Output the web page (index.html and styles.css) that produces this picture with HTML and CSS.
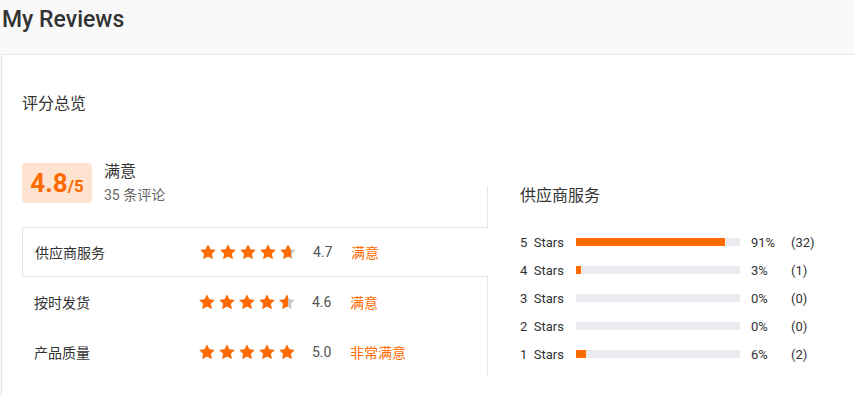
FILE: index.html
```html
<!DOCTYPE html>
<html lang="zh-CN">
<head>
  <meta charset="UTF-8">
  <meta name="viewport" content="width=device-width, initial-scale=1.0">
  <title>My Reviews</title>
  <link rel="stylesheet" href="styles.css">
</head>
<body>
  <svg class="defs" width="0" height="0">
    <symbol id="star" viewBox="0 0 24 24">
      <path d="M12 .6l3.6 7.3 8 1.1-5.8 5.6 1.4 8L12 18.8l-7.2 3.8 1.4-8L.4 9l8-1.1z"/>
    </symbol>
  </svg>

  <div class="header">
    <h1>My Reviews</h1>
  </div>

  <div class="card">
    <h2 class="section-title">评分总览</h2>

    <div class="overview">
      <div class="left">
        <div class="summary">
          <div class="score-box"><span class="big">4.8</span><span class="small">/5</span></div>
          <div class="summary-text">
            <div class="mood">满意</div>
            <div class="count">35 条评论</div>
          </div>
        </div>

        <div class="rows">
          <div class="row active">
            <span class="row-label">供应商服务</span>
            <span class="stars">
              <span class="stars-base">
                <svg><use href="#star"/></svg><svg><use href="#star"/></svg><svg><use href="#star"/></svg><svg><use href="#star"/></svg><svg><use href="#star"/></svg>
              </span>
              <span class="stars-fill" style="width: 91px">
                <svg><use href="#star"/></svg><svg><use href="#star"/></svg><svg><use href="#star"/></svg><svg><use href="#star"/></svg><svg><use href="#star"/></svg>
              </span>
            </span>
            <span class="row-score">4.7</span>
            <span class="row-mood">满意</span>
          </div>
          <div class="row">
            <span class="row-label">按时发货</span>
            <span class="stars">
              <span class="stars-base">
                <svg><use href="#star"/></svg><svg><use href="#star"/></svg><svg><use href="#star"/></svg><svg><use href="#star"/></svg><svg><use href="#star"/></svg>
              </span>
              <span class="stars-fill" style="width: 89px">
                <svg><use href="#star"/></svg><svg><use href="#star"/></svg><svg><use href="#star"/></svg><svg><use href="#star"/></svg><svg><use href="#star"/></svg>
              </span>
            </span>
            <span class="row-score">4.6</span>
            <span class="row-mood">满意</span>
          </div>
          <div class="row">
            <span class="row-label">产品质量</span>
            <span class="stars">
              <span class="stars-base">
                <svg><use href="#star"/></svg><svg><use href="#star"/></svg><svg><use href="#star"/></svg><svg><use href="#star"/></svg><svg><use href="#star"/></svg>
              </span>
              <span class="stars-fill" style="width: 100px">
                <svg><use href="#star"/></svg><svg><use href="#star"/></svg><svg><use href="#star"/></svg><svg><use href="#star"/></svg><svg><use href="#star"/></svg>
              </span>
            </span>
            <span class="row-score">5.0</span>
            <span class="row-mood">非常满意</span>
          </div>
        </div>
      </div>

      <div class="detail">
        <h3 class="detail-title">供应商服务</h3>
        <div class="bar-row">
          <span class="bar-label">5&nbsp; Stars</span>
          <span class="bar"><span class="bar-fill" style="width: 91%"></span></span>
          <span class="bar-pct">91%</span>
          <span class="bar-count">(32)</span>
        </div>
        <div class="bar-row">
          <span class="bar-label">4&nbsp; Stars</span>
          <span class="bar"><span class="bar-fill" style="width: 3%"></span></span>
          <span class="bar-pct">3%</span>
          <span class="bar-count">(1)</span>
        </div>
        <div class="bar-row">
          <span class="bar-label">3&nbsp; Stars</span>
          <span class="bar"><span class="bar-fill" style="width: 0%"></span></span>
          <span class="bar-pct">0%</span>
          <span class="bar-count">(0)</span>
        </div>
        <div class="bar-row">
          <span class="bar-label">2&nbsp; Stars</span>
          <span class="bar"><span class="bar-fill" style="width: 0%"></span></span>
          <span class="bar-pct">0%</span>
          <span class="bar-count">(0)</span>
        </div>
        <div class="bar-row">
          <span class="bar-label">1&nbsp; Stars</span>
          <span class="bar"><span class="bar-fill" style="width: 6%"></span></span>
          <span class="bar-pct">6%</span>
          <span class="bar-count">(2)</span>
        </div>
      </div>
    </div>
  </div>
</body>
</html>
```

FILE: styles.css
```css
body { margin: 0; background: #f9f9f9; font-family: Roboto, "Noto Sans CJK SC", sans-serif; color: #333; }
.defs { position: absolute; }

.header { height: 54px; box-sizing: border-box; padding: 6px 2px 0; }
.header h1 { margin: 0; font-size: 23px; line-height: 28px; font-weight: 500; color: #333; }

.card { margin-left: 1px; background: #fff; border-top: 1px solid #e6e6e6; border-left: 1px solid #e6e6e6; padding: 39px 20px 20px; min-height: 320px; }
.section-title { margin: 0; font-size: 16px; line-height: 20px; font-weight: 400; }

.overview { display: flex; align-items: flex-end; margin-top: 49px; }
.left { width: 465px; }

.summary { display: flex; align-items: flex-start; gap: 12px; margin-bottom: 22px; }
.score-box { width: 70px; height: 40px; background: #fee3d1; border-radius: 4px; display: flex; align-items: baseline; justify-content: center; color: #ff6a00; font-weight: 700; line-height: 40px; }
.score-box .big { font-size: 26px; }
.score-box .small { font-size: 17px; }
.mood { font-size: 16px; line-height: 20px; margin-top: -1px; }
.count { font-size: 14px; line-height: 20px; color: #666; margin-top: 3px; }

.row { height: 50px; box-sizing: border-box; display: flex; align-items: center; padding-left: 12px; font-size: 14px; }
.row.active { border: 1px solid #e6e6e6; border-right: none; background: #fff; margin-right: -1px; position: relative; z-index: 1; }
.row-label { width: 165px; }
.stars { position: relative; width: 97px; height: 16px; }
.stars-base, .stars-fill { position: absolute; top: 0; left: 0; display: flex; gap: 4px; height: 16px; overflow: hidden; white-space: nowrap; }
.stars svg { width: 16px; height: 16px; flex: none; }
.stars-base svg { fill: #c8c8c8; }
.stars-fill svg { fill: #ff6a00; }
.row-score { margin-left: 16px; width: 38px; color: #555; }
.row-mood { color: #ff6a00; }

.detail { flex: 1; border-left: 1px solid #e6e6e6; padding: 0 0 9px 32px; }
.detail-title { margin: 0 0 22px; font-size: 16px; line-height: 20px; font-weight: 400; }
.bar-row { display: flex; align-items: center; height: 28px; font-size: 13px; }
.bar-label { width: 56px; }
.bar { width: 164px; height: 8px; background: #ebebef; }
.bar-fill { display: block; height: 100%; background: #ff6a00; }
.bar-pct { margin-left: 11px; width: 40px; }
```
